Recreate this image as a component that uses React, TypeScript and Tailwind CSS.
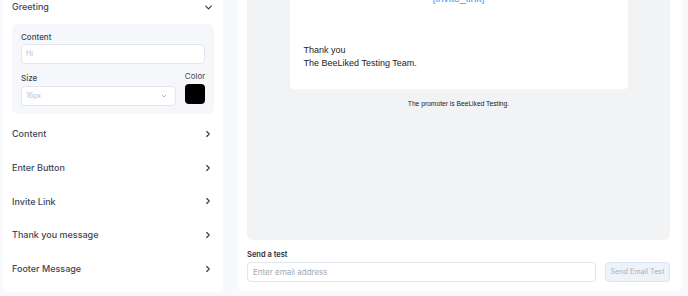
import { ChevronDown, ChevronRight } from 'lucide-react';

const SECTIONS = ['Content', 'Enter Button', 'Invite Link', 'Thank you message', 'Footer Message'];

function SectionRow({ label }: { label: string }) {
  return (
    <div className="flex h-[33.75px] items-center justify-between px-[9px]">
      <span className="text-[9px] font-medium text-[#3f4654]">{label}</span>
      <ChevronRight size={10} strokeWidth={2.6} className="mr-[1px] text-[#2f3540]" />
    </div>
  );
}

function SettingsPanel() {
  return (
    <div className="-mt-[10px] ml-[3px] w-[220px] shrink-0 rounded-md bg-white px-[9px] pb-[6px]">
      {/* Greeting (expanded) */}
      <div className="flex h-[34px] items-center justify-between">
        <span className="text-[9px] font-medium text-[#3f4654]">Greeting</span>
        <ChevronDown size={11} strokeWidth={2.4} className="text-[#2f3540]" />
      </div>
      <div className="rounded-md bg-[#f5f7fa] px-[9px] pt-[7px] pb-[8px]">
        <div className="text-[8px] leading-[12px] font-medium text-[#3f4654]">Content</div>
        <div className="mt-[1px] flex h-[20px] items-center rounded-[4px] border border-[#e3e6ec] bg-white px-[4px] text-[7px] text-[#b9bfca]">
          Hi
        </div>
        <div className="mt-[6px] flex items-end gap-[9px]">
          <div className="flex-1">
            <div className="text-[8px] leading-[12px] font-medium text-[#3f4654]">Size</div>
            <div className="mt-[2px] flex h-[20px] items-center justify-between rounded-[4px] border border-[#e3e6ec] bg-white pl-[4px] pr-[7px] text-[7px] text-[#b9bfca]">
              <span>16px</span>
              <ChevronDown size={8} strokeWidth={2} className="text-[#8a93a3]" />
            </div>
          </div>
          <div className="mb-[2px] flex w-[20px] flex-col items-center">
            <div className="text-[8px] leading-[12px] text-[#3f4654]">Color</div>
            <div className="mt-[2px] h-[20px] w-[20px] rounded-[4px] bg-black" />
          </div>
        </div>
      </div>
      <div className="mt-[3px] -mx-[9px]">
        {SECTIONS.map((s) => (
          <SectionRow key={s} label={s} />
        ))}
      </div>
    </div>
  );
}

function PreviewPanel() {
  return (
    <div className="-mt-[20px] w-[444px] shrink-0 rounded-md bg-white pl-[9px] pr-[12px] pb-[9px]">
      {/* Email preview */}
      <div className="h-[260px] rounded-md bg-[#f2f3f5]">
        <div className="mx-auto w-[338px] rounded-b-[4px] bg-white px-[14px] pt-[11px] pb-[19px] font-['Liberation_Sans',Arial,sans-serif]">
          <div className="text-center text-[10.5px] leading-[14px] text-[#3b9cf5]">{'{invite_link}'}</div>
          <div className="mt-[39px] text-[9px] leading-[13px] text-[#222]">
            <div>Thank you</div>
            <div>The BeeLiked Testing Team.</div>
          </div>
        </div>
        <div className="mt-[10px] text-center font-['Liberation_Sans',Arial,sans-serif] text-[6.7px] leading-[10px] text-[#222]">
          The promoter is BeeLiked Testing.
        </div>
      </div>

      {/* Send a test */}
      <div className="mt-[10px] text-[7.5px] leading-[10px] font-semibold text-[#2a2f3a]">Send a test</div>
      <div className="mt-[2px] flex gap-[9px]">
        <div className="flex h-[20px] flex-1 items-center rounded-[4px] border border-[#e3e6ec] bg-white px-[5px] text-[8px] text-[#a3a9b5]">
          Enter email address
        </div>
        <button className="h-[20px] w-[65px] rounded-[4px] border border-[#d8e5f6] bg-[#eef3fa] text-[7.2px] text-[#a6aebb]">
          Send Email Test
        </button>
      </div>
    </div>
  );
}

export default function App() {
  return (
    <div className="flex h-[296px] w-[688px] items-start gap-[15px] overflow-hidden bg-[#f7f9fc] font-['Inter',sans-serif]">
      <SettingsPanel />
      <PreviewPanel />
    </div>
  );
}
